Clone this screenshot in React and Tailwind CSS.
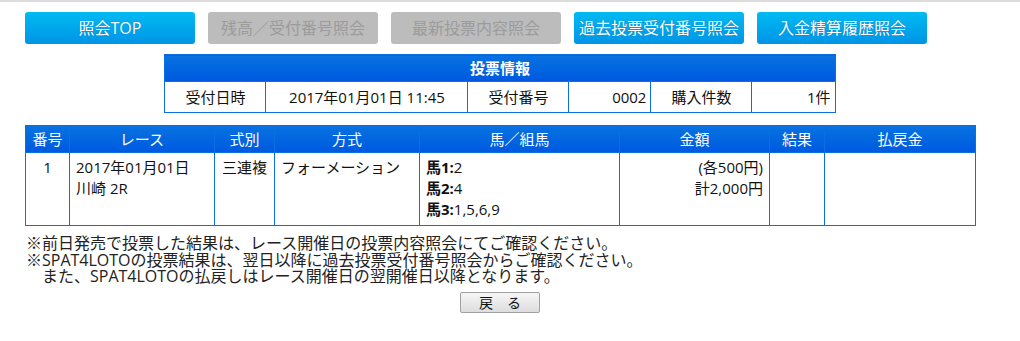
import React from 'react';

const font = { fontFamily: '"Open Sans", "Noto Sans CJK JP", sans-serif' };

const navButtons = [
  { label: '照会TOP', active: true },
  { label: '残高／受付番号照会', active: false },
  { label: '最新投票内容照会', active: false },
  { label: '過去投票受付番号照会', active: true },
  { label: '入金精算履歴照会', active: true },
];

function NavButton({ label, active }) {
  if (!active) {
    return (
      <div className="w-[170px] h-[32px] rounded-[3px] bg-[#bcbcbc] text-[#9b9b9b] text-[16px] flex items-center justify-center">
        {label}
      </div>
    );
  }
  return (
    <div className="w-[170px] h-[32px] rounded-[3px] bg-gradient-to-b from-[#00bbf2] to-[#0094e6] text-white text-[16px] flex items-center justify-center [text-shadow:0_0_1px_rgba(0,60,140,0.5)]">
      {label}
    </div>
  );
}

function App() {
  const th = 'border border-[#0a6fe0] text-white font-normal h-[27px] p-0 text-center';
  const td = 'border border-[#0a6fe0] align-top pt-[4px] pb-[5px] leading-[21px]';
  const info = 'border border-[#0a6fe0] whitespace-nowrap';

  return (
    <div className="w-[1020px] h-[341px] bg-white text-[#111] text-[15px]" style={font}>
      <div className="h-[2px] bg-[#dcdcdc]" />
      <div className="ml-[25px] w-[950px]">
        <div className="flex gap-[13px] mt-[10px]">
          {navButtons.map((b) => (
            <NavButton key={b.label} {...b} />
          ))}
        </div>

        <table className="mx-auto mt-[10px] w-[670px] table-fixed border-collapse">
          <colgroup>
            <col className="w-[101px]" />
            <col className="w-[202px]" />
            <col className="w-[101px]" />
            <col className="w-[82px]" />
            <col className="w-[101px]" />
            <col className="w-[83px]" />
          </colgroup>
          <thead>
            <tr>
              <th colSpan={6} className="border border-[#0a6fe0] h-[27px] p-0 text-white font-bold bg-gradient-to-b from-[#0a72e0] to-[#0058e0]">
                投票情報
              </th>
            </tr>
          </thead>
          <tbody>
            <tr className="h-[31px]">
              <td className={`${info} text-center`}>受付日時</td>
              <td className={`${info} text-center`}>2017年01月01日 11:45</td>
              <td className={`${info} text-center`}>受付番号</td>
              <td className={`${info} text-right pr-[4px]`}>0002</td>
              <td className={`${info} text-center`}>購入件数</td>
              <td className={`${info} text-right pr-[4px]`}>1件</td>
            </tr>
          </tbody>
        </table>

        <table className="mt-[12px] w-[950px] table-fixed border-collapse">
          <colgroup>
            <col className="w-[44px]" />
            <col className="w-[145px]" />
            <col className="w-[60px]" />
            <col className="w-[145px]" />
            <col className="w-[200px]" />
            <col className="w-[150px]" />
            <col className="w-[55px]" />
            <col className="w-[151px]" />
          </colgroup>
          <thead>
            <tr className="bg-gradient-to-b from-[#0a72e0] to-[#0058e0]">
              <th className={th}>番号</th>
              <th className={th}>レース</th>
              <th className={th}>式別</th>
              <th className={th}>方式</th>
              <th className={th}>馬／組馬</th>
              <th className={th}>金額</th>
              <th className={th}>結果</th>
              <th className={th}>払戻金</th>
            </tr>
          </thead>
          <tbody>
            <tr>
              <td className={`${td} text-center`}>1</td>
              <td className={`${td} pl-[6px]`}>
                2017年01月01日
                <br />
                川崎 2R
              </td>
              <td className={`${td} text-center`}>三連複</td>
              <td className={`${td} pl-[6px]`}>フォーメーション</td>
              <td className={`${td} pl-[6px]`}>
                <div><span className="font-bold">馬1:</span>2</div>
                <div><span className="font-bold">馬2:</span>4</div>
                <div><span className="font-bold">馬3:</span>1,5,6,9</div>
              </td>
              <td className={`${td} text-right pr-[6px]`}>
                (各500円)
                <br />
                計2,000円
              </td>
              <td className={td}></td>
              <td className={td}></td>
            </tr>
          </tbody>
        </table>

        <div className="mt-[9px] pl-[1px] text-[16px] leading-[16.5px] text-[#222]">
          <p>※前日発売で投票した結果は、レース開催日の投票内容照会にてご確認ください。</p>
          <p>※SPAT4LOTOの投票結果は、翌日以降に過去投票受付番号照会からご確認ください。</p>
          <p>　また、SPAT4LOTOの払戻しはレース開催日の翌開催日以降となります。</p>
        </div>

        <div className="flex justify-center mt-[7px]">
          <button className="w-[80px] h-[21px] rounded-[2px] border border-[#a0a0a0] bg-gradient-to-b from-[#f6f6f6] to-[#dddddd] text-[14px] leading-[19px] text-[#111]">
            戻　る
          </button>
        </div>
      </div>
    </div>
  );
}

export default App;
